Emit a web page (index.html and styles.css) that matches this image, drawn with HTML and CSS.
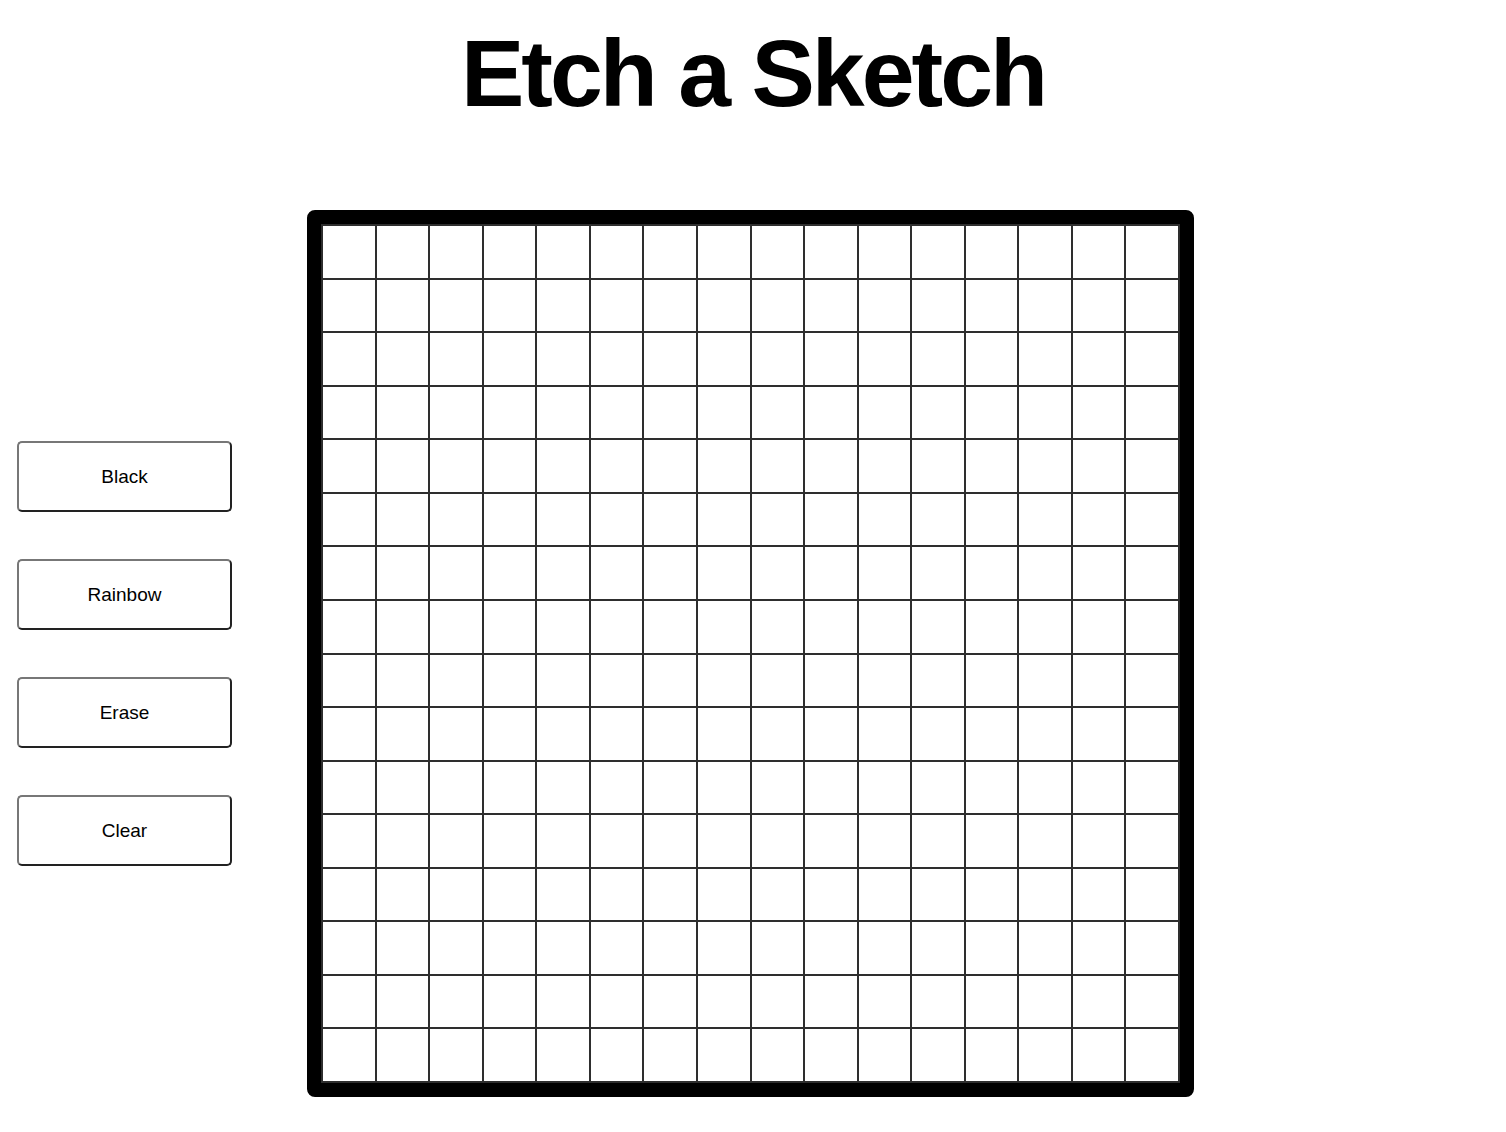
FILE: index.html
```html
<!DOCTYPE html>
<html lang="en">
<head>
  <meta charset="UTF-8">
  <title>Etch a Sketch</title>
  <link rel="stylesheet" href="styles.css">
</head>
<body>
  <h1>Etch a Sketch</h1>

  <div class="main">
    <div class="controls">
      <button class="mode-btn" id="black">Black</button>
      <button class="mode-btn" id="rainbow">Rainbow</button>
      <button class="mode-btn" id="erase">Erase</button>
      <button class="mode-btn" id="clear">Clear</button>
    </div>

    <div class="board">
      <div class="grid" id="grid"></div>
    </div>
  </div>

  <script>
    const grid = document.getElementById("grid");
    const size = 16;
    let mode = "black";

    function randomColor() {
      const h = Math.floor(Math.random() * 360);
      return `hsl(${h}, 80%, 55%)`;
    }

    function paint(e) {
      if (mode === "black") e.target.style.backgroundColor = "black";
      else if (mode === "rainbow") e.target.style.backgroundColor = randomColor();
      else e.target.style.backgroundColor = "";
    }

    for (let i = 0; i < size * size; i++) {
      const cell = document.createElement("div");
      cell.className = "cell";
      cell.addEventListener("mouseover", paint);
      grid.appendChild(cell);
    }

    document.getElementById("black").onclick = () => mode = "black";
    document.getElementById("rainbow").onclick = () => mode = "rainbow";
    document.getElementById("erase").onclick = () => mode = "erase";
    document.getElementById("clear").onclick = () => {
      document.querySelectorAll(".cell").forEach(c => c.style.backgroundColor = "");
    };
  </script>
</body>
</html>
```

FILE: styles.css
```css
body {
  margin: 0;
  font-family: "Liberation Sans", Arial, sans-serif;
  background-color: white;
  color: black;
}
h1 {
  margin: 18px 0 0;
  text-align: center;
  font-size: 95px;
  line-height: 110px;
  letter-spacing: -3px;
  font-weight: bold;
}
.main {
  display: flex;
  align-items: center;
  gap: 75px;
  margin-top: 82px;
  padding-left: 17px;
}
.controls {
  display: flex;
  flex-direction: column;
  gap: 47px;
}
.mode-btn {
  width: 215px;
  height: 71px;
  font-family: "Liberation Sans", Arial, sans-serif;
  font-size: 19px;
  color: black;
  background-color: white;
  border: 2px solid;
  border-color: #777 #222 #222 #777;
  border-radius: 5px;
  cursor: pointer;
}
.board {
  width: 887px;
  height: 887px;
  box-sizing: border-box;
  border: 14px solid black;
  border-radius: 8px;
}
.grid {
  display: grid;
  grid-template-columns: repeat(16, 1fr);
  grid-template-rows: repeat(16, 1fr);
  gap: 2px;
  padding: 2px;
  width: 100%;
  height: 100%;
  box-sizing: border-box;
  background-color: #2e2e2e;
}
.cell {
  background-color: white;
}
```
